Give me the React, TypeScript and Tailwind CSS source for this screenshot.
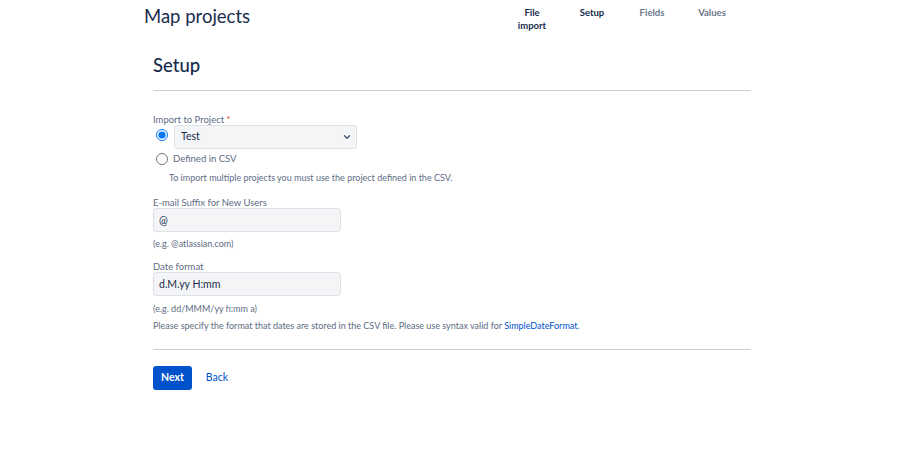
import { ChevronDown } from "lucide-react";

const font = { fontFamily: '"Lato", "Liberation Sans", sans-serif' };

function Step({ label, active }: { label: React.ReactNode; active?: boolean }) {
  return (
    <div
      className={`w-[60px] text-center text-[9.5px] font-bold leading-[13px] ${
        active ? "text-[#172b4d]" : "text-[#6b778c]"
      }`}
    >
      {label}
    </div>
  );
}

export default function App() {
  return (
    <div className="min-h-[460px] w-full bg-white text-[#172b4d]" style={font}>
      <header className="flex items-start pl-[144px]">
        <h1 className="mt-[4px] text-[18.5px] leading-[24px] text-[#172b4d]">Map projects</h1>
        <div className="ml-auto mr-[180px] mt-[6px] flex">
          <Step
            label={
              <>
                File
                <br />
                import
              </>
            }
            active
          />
          <Step label="Setup" active />
          <Step label="Fields" />
          <Step label="Values" />
        </div>
      </header>

      <main className="ml-[153px] w-[598px]">
        <h2 className="mt-[20px] text-[18.5px] font-medium leading-[26px]">Setup</h2>
        <div className="mt-[12px] h-px bg-[#cccccc]" />

        <form className="pt-[23px] text-[9.5px] text-[#5e6c84]">
          <label className="block leading-[11px]">
            Import to Project <span className="align-top text-[9px] text-[#de350b]">*</span>
          </label>
          <div className="flex items-start gap-[6px]">
            <input
              type="radio"
              name="project"
              defaultChecked
              className="ml-[3px] mt-[4px] h-[12px] w-[12px]"
            />
            <div className="relative">
              <select className="h-[24px] w-[183px] appearance-none rounded-[3px] border border-[#dfe1e6] bg-[#f4f5f7] pl-[6px] text-[10.5px] text-[#172b4d] outline-none">
                <option>Test</option>
              </select>
              <ChevronDown
                className="pointer-events-none absolute right-[5px] top-[7px] h-[10px] w-[10px] text-[#42526e]"
                strokeWidth={3}
              />
            </div>
          </div>
          <label className="mt-[3px] flex items-center gap-[5px] leading-[14px]">
            <input type="radio" name="project" className="ml-[3px] h-[12px] w-[12px]" />
            Defined in CSV
          </label>
          <p className="ml-[16px] mt-[5px] text-[9px] leading-[13px]">
            To import multiple projects you must use the project defined in the CSV.
          </p>

          <label className="mt-[13px] block leading-[11px]">E-mail Suffix for New Users</label>
          <input
            defaultValue="@"
            className="block h-[24px] w-[188px] rounded-[3px] border border-[#dfe1e6] bg-[#f4f5f7] px-[5px] text-[10.5px] text-[#172b4d] outline-none"
          />
          <p className="mt-[5px] text-[9px] leading-[13px]">(e.g. @atlassian.com)</p>

          <label className="mt-[11px] block leading-[11px]">Date format</label>
          <input
            defaultValue="d.M.yy H:mm"
            className="block h-[24px] w-[188px] rounded-[3px] border border-[#dfe1e6] bg-[#f4f5f7] px-[5px] text-[10.5px] text-[#172b4d] outline-none"
          />
          <p className="mt-[6px] text-[9px] leading-[13px]">(e.g. dd/MMM/yy h:mm a)</p>
          <p className="mt-[4px] text-[9px] leading-[13px]">
            Please specify the format that dates are stored in the CSV file. Please use syntax valid for{" "}
            <a className="text-[#0052cc]">SimpleDateFormat</a>.
          </p>

          <div className="mt-[17px] h-px bg-[#cccccc]" />

          <div className="mt-[16px] flex items-center gap-[14px]">
            <button
              type="button"
              className="h-[24px] rounded-[3px] bg-[#0052cc] px-[8px] text-[10.5px] font-bold text-white"
            >
              Next
            </button>
            <a className="text-[10.5px] text-[#0052cc]">Back</a>
          </div>
        </form>
      </main>
    </div>
  );
}
